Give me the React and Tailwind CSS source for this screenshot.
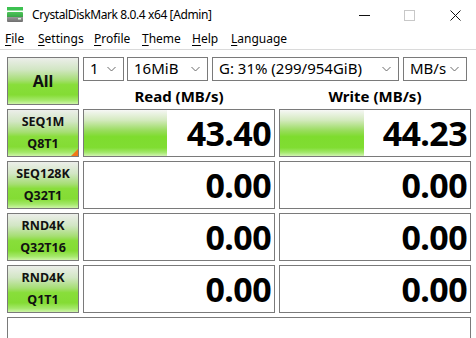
import React from "react";

const btnBg =
  "bg-[linear-gradient(to_bottom,#eceeea_0%,#d2e6c4_25%,#a6de74_48%,#88de3a_58%,#84dc34_80%,#a4e86a_92%,#cdf4a8_100%)]";
const barBg =
  "bg-[linear-gradient(to_bottom,#f6f7f5_0%,#d4eabf_22%,#98dc5c_45%,#7edc2e_58%,#80dd32_82%,#a2e86a_92%,#d2f4b2_100%)]";

function Chevron() {
  return (
    <svg width="9" height="6" viewBox="0 0 9 6" className="shrink-0">
      <path d="M0.5 1 L4.5 5 L8.5 1" fill="none" stroke="#6a6a6a" strokeWidth="1" />
    </svg>
  );
}

function Combo({ w, text }) {
  return (
    <div
      className={`${w} h-[24px] border border-[#7a7a7a] bg-white flex items-center justify-between pl-[6px] pr-[7px] text-[15px] leading-none text-black`}
    >
      <span className="-mt-[1px]">{text}</span>
      <Chevron />
    </div>
  );
}

function TestButton({ l1, l2, corner }) {
  return (
    <div
      className={`relative w-[72px] h-[48px] shrink-0 border border-[#7a7a7a] ${btnBg} flex flex-col items-center justify-center gap-[8px] text-[12.5px] font-bold leading-[14px] text-[#111]`}
    >
      <span>{l1}</span>
      <span>{l2}</span>
      {corner && (
        <span className="absolute right-0 bottom-0 w-0 h-0 border-l-[7px] border-l-transparent border-b-[7px] border-b-[#f07818]" />
      )}
    </div>
  );
}

function Value({ v, bar }) {
  return (
    <div className="w-[192px] h-[48px] shrink-0 border border-[#7a7a7a] bg-white flex items-stretch">
      {bar ? <div className={`${bar} ${barBg}`} /> : null}
      <div className="flex-1 flex items-center justify-end pr-[3px]">
        <span className="text-[34px] font-bold leading-none tracking-[-0.6px] text-black">{v}</span>
      </div>
    </div>
  );
}

function MenuItem({ w, first, rest }) {
  return (
    <span className={`${w} shrink-0`}>
      <span className="underline underline-offset-[2px] decoration-[1px]">{first}</span>
      {rest}
    </span>
  );
}

export default function App() {
  return (
    <div className="w-[476px] h-[338px] bg-white overflow-hidden font-['Noto_Sans',sans-serif] text-black">
      {/* Title bar */}
      <div className="h-[30px] flex items-center">
        <svg width="16" height="16" viewBox="0 0 16 16" className="ml-[7px] shrink-0">
          <defs>
            <linearGradient id="body" x1="0" y1="0" x2="0" y2="1">
              <stop offset="0" stopColor="#4fc65a" />
              <stop offset="0.45" stopColor="#3aa848" />
              <stop offset="0.5" stopColor="#9a9a9a" />
              <stop offset="1" stopColor="#6e6e6e" />
            </linearGradient>
          </defs>
          <rect x="0" y="0" width="16" height="3.5" fill="#3cc150" />
          <rect x="0" y="5" width="16" height="10" rx="1" fill="url(#body)" />
          <rect x="11" y="11" width="3" height="1.5" fill="#d8f0d8" />
        </svg>
        <span className="ml-[9px] text-[12px] leading-none text-black tracking-[-0.4px]">
          CrystalDiskMark 8.0.4 x64 [Admin]
        </span>
        <div className="ml-auto flex items-center">
          <svg width="12" height="12" viewBox="0 0 12 12" className="mr-[33px]">
            <path d="M0 6.5 H11" stroke="#111" strokeWidth="1" />
          </svg>
          <svg width="11" height="11" viewBox="0 0 11 11" className="mr-[35px]">
            <rect x="0.5" y="0.5" width="10" height="10" fill="none" stroke="#c8c8c8" strokeWidth="1" />
          </svg>
          <svg width="11" height="11" viewBox="0 0 11 11" className="mr-[15px]">
            <path d="M0.5 0.5 L10.5 10.5 M10.5 0.5 L0.5 10.5" stroke="#111" strokeWidth="1" />
          </svg>
        </div>
      </div>

      {/* Menu bar */}
      <div className="h-[20px] flex items-center pl-[5px] text-[12px] leading-none border-b border-[#dadada] pb-[1px]">
        <MenuItem w="w-[33px]" first="F" rest="ile" />
        <MenuItem w="w-[56px]" first="S" rest="ettings" />
        <MenuItem w="w-[48px]" first="P" rest="rofile" />
        <MenuItem w="w-[50px]" first="T" rest="heme" />
        <MenuItem w="w-[39px]" first="H" rest="elp" />
        <MenuItem w="w-[60px]" first="L" rest="anguage" />
      </div>

      {/* Main */}
      <div className="pl-[7px] pr-[5px] pt-[7px] flex flex-col gap-[4px]">
        <div className="flex gap-[4px] h-[48px]">
          <div
            className={`w-[72px] h-[48px] shrink-0 border border-[#7a7a7a] ${btnBg} flex items-center justify-center text-[16px] font-bold leading-none text-[#111]`}
          >
            All
          </div>
          <div className="flex-1 flex flex-col">
            <div className="flex h-[24px]">
              <Combo w="w-[41px]" text="1" />
              <div className="w-[3px]" />
              <Combo w="w-[81px]" text="16MiB" />
              <div className="w-[4px]" />
              <Combo w="w-[187px]" text="G: 31% (299/954GiB)" />
              <div className="w-[4px]" />
              <Combo w="w-[64px]" text="MB/s" />
            </div>
            <div className="flex gap-[4px] h-[24px]">
              <div className="w-[192px] pt-[7px] text-center text-[15px] font-bold leading-[16px]">Read (MB/s)</div>
              <div className="w-[192px] pt-[7px] text-center text-[15px] font-bold leading-[16px]">Write (MB/s)</div>
            </div>
          </div>
        </div>

        <div className="flex gap-[4px]">
          <TestButton l1="SEQ1M" l2="Q8T1" corner />
          <Value v="43.40" bar="w-[83px]" />
          <Value v="44.23" bar="w-[84px]" />
        </div>
        <div className="flex gap-[4px]">
          <TestButton l1="SEQ128K" l2="Q32T1" />
          <Value v="0.00" />
          <Value v="0.00" />
        </div>
        <div className="flex gap-[4px]">
          <TestButton l1="RND4K" l2="Q32T16" />
          <Value v="0.00" />
          <Value v="0.00" />
        </div>
        <div className="flex gap-[4px]">
          <TestButton l1="RND4K" l2="Q1T1" />
          <Value v="0.00" />
          <Value v="0.00" />
        </div>
        <div className="h-[40px] border border-[#7a7a7a] bg-white" />
      </div>
    </div>
  );
}
